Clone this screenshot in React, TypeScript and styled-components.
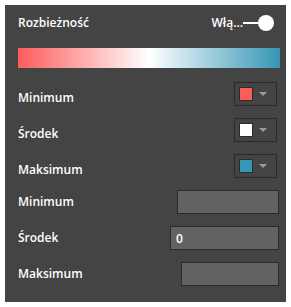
import React from "react"
import styled, { createGlobalStyle } from "styled-components"

const GlobalStyle = createGlobalStyle`
  html, body {
    margin: 0;
    padding: 0;
    background: #ffffff;
  }
  body {
    font-family: "Open Sans", "Noto Sans", sans-serif;
  }
`

const colorRows = [
  { label: "Minimum", color: "#fd5c5c" },
  { label: "Środek", color: "#ffffff" },
  { label: "Maksimum", color: "#3597b5" },
]

const valueRows = [
  { label: "Minimum", value: "", width: 102 },
  { label: "Środek", value: "0", width: 109 },
  { label: "Maksimum", value: "", width: 98 },
]

export default function App() {
  return (
    <>
      <GlobalStyle />
      <Panel>
        <Header>
          <Label>Rozbieżność</Label>
          <Toggle>
            <ToggleText>Włą...</ToggleText>
            <Track />
            <Knob />
          </Toggle>
        </Header>
        <Gradient />
        <Rows $top={14}>
          {colorRows.map(row => (
            <Row key={row.label}>
              <Label $drop={8}>{row.label}</Label>
              <Picker>
                <Swatch $color={row.color} />
                <Arrow />
              </Picker>
            </Row>
          ))}
        </Rows>
        <Rows $top={12}>
          {valueRows.map(row => (
            <Row key={row.label}>
              <Label>{row.label}</Label>
              <ValueInput $width={row.width} defaultValue={row.value} />
            </Row>
          ))}
        </Rows>
      </Panel>
    </>
  )
}

const Panel = styled.div`
  margin: 5px;
  width: 281px;
  height: 297px;
  box-sizing: border-box;
  background: #444444;
  padding: 0 6px 0 13px;
  display: flex;
  flex-direction: column;
`
const Header = styled.div`
  height: 36px;
  display: flex;
  align-items: center;
  justify-content: space-between;
`
const Label = styled.div<{ $drop?: number }>`
  color: #ffffff;
  font-size: 12px;
  font-weight: 600;
  line-height: 16px;
  padding-top: ${p => p.$drop || 0}px;
`
const Toggle = styled.div`
  display: flex;
  align-items: center;
  margin-right: 6px;
`
const ToggleText = styled.span`
  color: #ffffff;
  font-size: 12px;
  font-weight: 600;
  line-height: 16px;
`
const Track = styled.span`
  width: 15px;
  height: 2px;
  background: #ffffff;
`
const Knob = styled.span`
  width: 16px;
  height: 16px;
  border-radius: 50%;
  background: #ffffff;
`
const Gradient = styled.div`
  margin-top: 7px;
  height: 20px;
  background: linear-gradient(to right, #fd5c5c 0%, #ffffff 50%, #3597b5 100%);
`
const Rows = styled.div<{ $top: number }>`
  margin-top: ${p => p.$top}px;
  display: flex;
  flex-direction: column;
  gap: 12px;
`
const Row = styled.div`
  height: 24px;
  display: flex;
  align-items: center;
  justify-content: space-between;
`
const Picker = styled.div`
  width: 43px;
  height: 24px;
  box-sizing: border-box;
  border: 1px solid #2a2a2a;
  margin-right: 3px;
  display: flex;
  align-items: center;
  padding-left: 4px;
  gap: 6px;
`
const Swatch = styled.span<{ $color: string }>`
  width: 14px;
  height: 14px;
  box-sizing: border-box;
  border: 1px solid #2a2a2a;
  background: ${p => p.$color};
`
const Arrow = styled.span`
  width: 0;
  height: 0;
  border-left: 4px solid transparent;
  border-right: 4px solid transparent;
  border-top: 4px solid #9a9a9a;
`
const ValueInput = styled.input<{ $width: number }>`
  width: ${p => p.$width}px;
  height: 24px;
  box-sizing: border-box;
  margin: 0 1px 0 0;
  border: 1px solid #2a2a2a;
  background: #636363;
  color: #ffffff;
  font-family: "Open Sans", "Noto Sans", sans-serif;
  font-size: 12px;
  font-weight: 600;
  padding: 0 5px;
  outline: none;
`
